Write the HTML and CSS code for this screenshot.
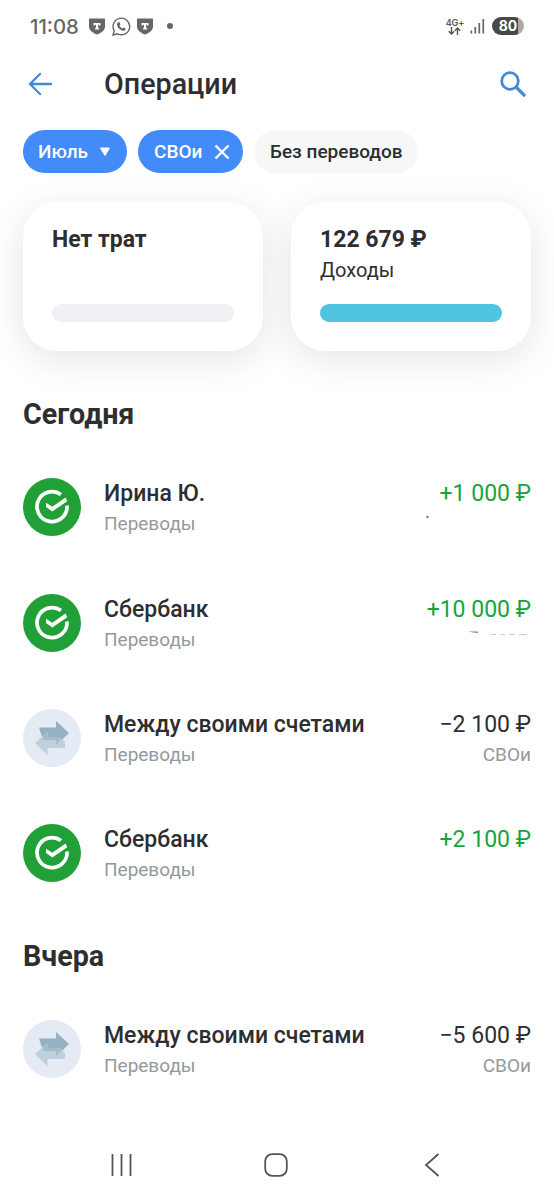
FILE: index.html
```html
<!DOCTYPE html>
<html lang="ru">
<head>
<meta charset="utf-8">
<title>Операции</title>
<link rel="stylesheet" href="styles.css">
</head>
<body>
<svg width="0" height="0" class="defs">
  <symbol id="sber" viewBox="0 0 58 58">
    <circle cx="29" cy="29" r="29" fill="#21a038"/>
    <path d="M38 16.6A15 15 0 1 0 44 27.5" fill="none" stroke="#fff" stroke-width="3.7"/>
    <path d="M23 24.8V29L29.3 33.4L44.2 23.2L42.6 19.4L29.3 28.8Z" fill="#fff"/>
  </symbol>
  <symbol id="swap" viewBox="0 0 58 58">
    <circle cx="29" cy="29" r="29" fill="#e4ebf5"/>
    <path d="M16 18.5H33V12L46 24L33 36.5V31H20Z" fill="#95b0c0"/>
    <path d="M12 34L24.5 23V28H37L42 33V39H24.5V46Z" fill="#bdd0db"/>
    <path d="M20 27L24.5 23V28H37L38.5 30L33 36.5V31H20Z" fill="#a5bdcb"/>
  </symbol>
  <symbol id="shield" viewBox="0 0 16 17">
    <path d="M0 0.5H16V8.5C16 12.5 12 15 8 16.5C4 15 0 12.5 0 8.5Z" fill="#666"/>
    <path d="M4.5 5H11.5V7.5H10.2V6.8H9.1V10.2H10V11.4H6V10.2H6.9V6.8H5.8V7.5H4.5Z" fill="#fff"/>
  </symbol>
</svg>
<div class="screen">
  <div class="status">
    <span class="time">11:08</span>
    <svg class="shield" width="16" height="17"><use href="#shield"/></svg>
    <svg class="phone" width="19" height="19" viewBox="0 0 19 19">
      <path d="M1 18L2.3 13.8A8.3 8.3 0 1 1 5.5 16.8Z" fill="none" stroke="#666" stroke-width="1.4"/>
      <path d="M6.2 5.2L7.6 5.3L8.4 7.4L7.5 8.5C8.1 9.9 9.1 10.8 10.5 11.5L11.5 10.5L13.6 11.5C13.6 13.1 12.6 13.8 11.2 13.8C8.1 13.4 5.3 10.6 5 7.6C5 6.6 5.4 5.7 6.2 5.2Z" fill="#666"/>
    </svg>
    <svg class="shield" width="16" height="17"><use href="#shield"/></svg>
    <span class="dot"></span>
    <div class="net"><span>4G+</span>
      <svg width="13" height="8" viewBox="0 0 13 8"><path d="M3.5 0V7M0.8 4.3L3.5 7L6.2 4.3M9.5 8V1M6.8 3.7L9.5 1L12.2 3.7" fill="none" stroke="#555" stroke-width="1.4"/></svg>
    </div>
    <svg class="signal" width="15" height="16" viewBox="0 0 15 16"><path d="M1.3 12.5V15.5M5.3 9V15.5M9.3 5V15.5M13.3 1V15.5" stroke="#666" stroke-width="1.7"/></svg>
    <div class="battery">80</div>
  </div>

  <header class="header">
    <svg width="24" height="24" viewBox="0 0 24 24"><path d="M23 12H2M12 2L2 12L12 22" fill="none" stroke="#4489da" stroke-width="2.3" stroke-linecap="round"/></svg>
    <h1 class="title"><span>Операции</span></h1>
    <svg width="26" height="27" viewBox="0 0 26 27"><circle cx="10" cy="10" r="8.3" fill="none" stroke="#4489da" stroke-width="2.8"/><path d="M16 16L25 25" stroke="#4489da" stroke-width="3.2"/></svg>
  </header>

  <div class="chips">
    <div class="chip month"><span>Июль</span><svg width="10" height="9" viewBox="0 0 10 9"><path d="M.5 1H9.5L5 8.5Z" fill="#fff" stroke="#fff" stroke-linejoin="round"/></svg></div>
    <div class="chip account"><span>СВОи</span><svg width="16" height="16" viewBox="0 0 16 16"><path d="M1.5 1.5L14.5 14.5M14.5 1.5L1.5 14.5" stroke="#fff" stroke-width="2.4"/></svg></div>
    <div class="chip plain"><span>Без переводов</span></div>
  </div>

  <div class="cards">
    <section class="card"><strong>Нет трат</strong><p></p><div class="bar"></div></section>
    <section class="card"><strong>122 679 ₽</strong><p>Доходы</p><div class="bar income"></div></section>
  </div>

  <h2 class="day">Сегодня</h2>
  <div class="list">
    <article class="row"><svg class="avatar"><use href="#sber"/></svg>
      <div class="info"><b>Ирина Ю.</b><small>Переводы</small></div>
      <div class="sum plus"><span>+1 000 ₽</span><svg class="trace" width="105" height="20" viewBox="0 0 105 20"><circle cx="1.5" cy="9" r="1.2" fill="#777"/></svg></div></article>
    <article class="row"><svg class="avatar"><use href="#sber"/></svg>
      <div class="info"><b>Сбербанк</b><small>Переводы</small></div>
      <div class="sum plus"><span>+10 000 ₽</span><svg class="trace" width="105" height="20" viewBox="0 0 105 20"><path d="M42 7.5H52V9L47 8.4Z" fill="#888"/><path d="M65 10.5H70M74 10.5H79M83 10.5H89M93 10.5H101" stroke="#ccc"/></svg></div></article>
    <article class="row"><svg class="avatar"><use href="#swap"/></svg>
      <div class="info"><b>Между своими счетами</b><small>Переводы</small></div>
      <div class="sum"><span>−2 100 ₽</span><small>СВОи</small></div></article>
    <article class="row"><svg class="avatar"><use href="#sber"/></svg>
      <div class="info"><b>Сбербанк</b><small>Переводы</small></div>
      <div class="sum plus"><span>+2 100 ₽</span></div></article>
  </div>
  <h2 class="day later">Вчера</h2>
  <div class="list">
    <article class="row"><svg class="avatar"><use href="#swap"/></svg>
      <div class="info"><b>Между своими счетами</b><small>Переводы</small></div>
      <div class="sum"><span>−5 600 ₽</span><small>СВОи</small></div></article>
  </div>

  <nav class="nav">
    <svg width="22" height="24" viewBox="0 0 22 24"><path d="M1.5 1V23M10.5 1V23M19.5 1V23" stroke="#555" stroke-width="1.8"/></svg>
    <svg class="home" width="24" height="24" viewBox="0 0 24 24"><rect x="1.2" y="1.2" width="21.6" height="21.6" rx="7" fill="none" stroke="#555" stroke-width="1.8"/></svg>
    <svg width="16" height="24" viewBox="0 0 16 24"><path d="M14.5 1L2 12L14.5 23" fill="none" stroke="#555" stroke-width="1.8"/></svg>
  </nav>
</div>
</body>
</html>
```

FILE: styles.css
```css
* { box-sizing: border-box; margin: 0; padding: 0; }
body { background: #fff; font-family: Roboto, "Noto Sans", sans-serif; color: #2d2e30; }
svg { display: block; flex: none; }
.defs { position: absolute; }
.screen { width: 554px; height: 1200px; display: flex; flex-direction: column; overflow: hidden; }

.status { height: 52px; padding: 0 30px; display: flex; align-items: center; }
.time { width: 59px; font: 500 20.3px Inter, sans-serif; color: #666; }
.phone { margin: 0 6px 0 7px; }
.dot { width: 6px; height: 6px; border-radius: 50%; background: #666; margin-left: 14px; }
.net { margin-left: auto; display: flex; flex-direction: column; align-items: center; font: 600 9px/9px Inter, sans-serif; letter-spacing: -.2px; color: #555; }
.signal { margin: 0 7px 0 6px; }
.battery { width: 32px; height: 18px; border-radius: 9px; background: linear-gradient(90deg, #484848 80%, #aaa 80%); color: #fff; font: 700 14px/18px Inter, sans-serif; text-align: center; }

.header { height: 64px; padding: 0 28px; display: flex; align-items: center; }
.title { flex: 1; padding-left: 52px; font-size: 28.7px; font-weight: 500; line-height: 34px; }

.chips { display: flex; gap: 11px; margin: 14px 23px 0; height: 43px; }
.chip { display: flex; align-items: center; justify-content: space-between; padding: 0 16px; border-radius: 22px; background: #428bf9; color: #fff; font-size: 19px; font-weight: 500; white-space: nowrap; }
.month { width: 104px; padding: 0 17px 0 15px; }
.account { width: 105px; padding-right: 13px; }
.plain { width: 164px; background: #f6f8f8; color: #2d2e30; }

.cards { display: flex; gap: 28px; margin: 29px 23px 0; height: 149px; }
.card { flex: 1; padding: 24px 29px 29px; display: flex; flex-direction: column; border-radius: 34px; background: #fff; box-shadow: 0 8px 38px rgba(0, 0, 0, .11); }
.card strong { font-size: 23px; line-height: 28px; font-weight: 700; }
.card p { font-size: 20px; line-height: 24px; margin-top: 4px; }
.bar { margin-top: auto; height: 18px; border-radius: 9px; background: #eff1f4; }
.income { background: #50c4df; }

.day { margin: 46px 23px 0; font-size: 28.7px; line-height: 34px; font-weight: 700; }
.later { margin-top: 28px; }
.list { padding: 18.5px 23px 0; }
.row { height: 115.4px; display: flex; align-items: center; }
.avatar { width: 58px; height: 58px; margin-right: 23px; }
.info, .sum { display: flex; flex-direction: column; height: 58px; padding-top: 1px; }
.info { flex: 1; }
.info b { font-size: 23px; line-height: 30px; font-weight: 500; }
.row small { font-size: 19px; line-height: 30px; color: #9299a2; }
.sum { align-items: flex-end; }
.sum span { font-size: 23px; line-height: 30px; }
.plus { color: #17a53b; }
.trace { margin-top: -1px; }

.nav { margin: auto 114px 23px 111px; display: flex; align-items: center; justify-content: space-between; }
.home { margin-right: 5px; }
```
